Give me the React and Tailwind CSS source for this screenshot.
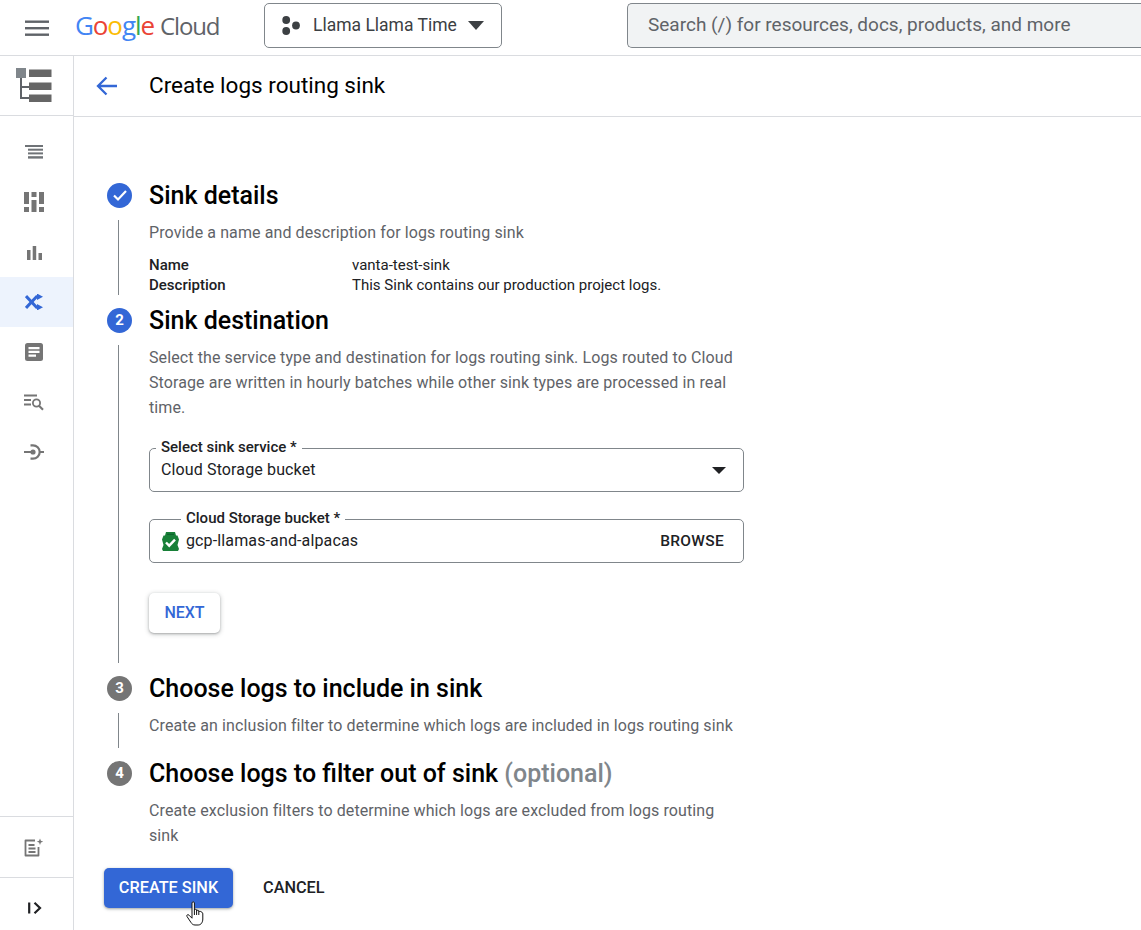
const FONT = "font-['Roboto',sans-serif]";

function Step({ badge, title, children, line = true, bg = "bg-[#3367d6]" }) {
  return (
    <section>
      <div className="flex h-[50px] items-center">
        <div className={`flex h-[25px] w-[25px] items-center justify-center rounded-full ${bg} text-[15px] font-bold text-white`}>
          {badge}
        </div>
        <h2 className="ml-[17px] pt-px text-[25px] font-medium leading-[30px] text-[#000]">{title}</h2>
      </div>
      <div className={`ml-[11px] pl-[30px] ${line ? "border-l border-[#80868b]" : "border-l border-transparent"}`}>{children}</div>
    </section>
  );
}

function SideItem({ active, children }) {
  return (
    <div className={`flex h-[50px] items-center justify-center pr-[5px] ${active ? "bg-[#edf3fd]" : ""}`}>{children}</div>
  );
}

function Field({ label, labelClass, children }) {
  return (
    <div className="relative flex h-[44px] items-center rounded-[5px] border border-[#80868b] pl-[11px] pr-[19px] text-[16px] tracking-[0.13px] text-[#202124]">
      <span className={`absolute top-[-11px] bg-white px-[5px] text-[15px] font-medium leading-[18px] tracking-normal text-[#202124] ${labelClass}`}>{label}</span>
      {children}
    </div>
  );
}

export default function App() {
  return (
    <div className={`${FONT} h-[930px] w-[1141px] overflow-hidden bg-white text-[#202124]`}>
      <header className="flex h-[56px] items-center border-b border-[#dadce0]">
        <svg className="ml-[25px] h-[24px] w-[24px]" viewBox="0 0 24 24" fill="#5f6368">
          <rect x="0" y="4.5" width="24" height="2.4" />
          <rect x="0" y="11" width="24" height="2.4" />
          <rect x="0" y="17.5" width="24" height="2.4" />
        </svg>
        <div className="mb-[5px] ml-[26px] flex w-[146px] items-baseline whitespace-nowrap font-['Open_Sans',sans-serif] text-[26px] leading-[32px] tracking-[-1.1px]">
          <span className="font-medium text-[#4285f4]">G</span>
          <span className="font-medium text-[#ea4335]">o</span>
          <span className="font-medium text-[#fbbc04]">o</span>
          <span className="font-medium text-[#4285f4]">g</span>
          <span className="font-medium text-[#34a853]">l</span>
          <span className="font-medium text-[#ea4335]">e</span>
          <span className="ml-[6px] text-[24px] text-[#5f6368]">Cloud</span>
        </div>
        <div className="mb-[4px] ml-[43px] flex h-[45px] w-[238px] items-center rounded-[5px] border border-[#80868b] pl-[17px]">
          <svg className="h-[19px] w-[18px]" viewBox="0 0 18 19" fill="#3c4043">
            <circle cx="4.2" cy="4" r="3.9" />
            <circle cx="4.2" cy="15" r="3.9" />
            <circle cx="14" cy="9.5" r="3.9" />
          </svg>
          <span className="ml-[13px] text-[17.5px] text-[#3c4043]">Llama Llama Time</span>
          <svg className="ml-[11px] h-[9px] w-[16px]" viewBox="0 0 16 9" fill="#3c4043"><path d="M0 0h16L8 9z" /></svg>
        </div>
        <div className="mb-[4px] ml-[125px] flex h-[45px] flex-1 items-center rounded-l-[5px] border border-r-0 border-[#80868b] bg-[#f1f3f4] pl-[20px] text-[19px] text-[#5f6368]">
          Search (/) for resources, docs, products, and more
        </div>
      </header>

      <div className="flex h-[874px]">
        <aside className="flex w-[74px] flex-col border-r border-[#dadce0]">
          <div className="flex h-[60px] items-center justify-center border-b border-[#dadce0] pr-[5px]">
            <svg className="h-[36px] w-[36px]" viewBox="0 0 36 36">
              <rect x="0" y="0" width="10" height="10" fill="#80868b" />
              <path d="M5 10v20h8M5 19h8" fill="none" stroke="#5f6368" strokeWidth="2" />
              <rect x="13" y="1.5" width="22.5" height="7.5" fill="#666" />
              <rect x="13" y="14.5" width="22.5" height="7.5" fill="#666" />
              <rect x="13" y="26.5" width="22.5" height="7.5" fill="#666" />
            </svg>
          </div>
          <div className="flex flex-col pt-[11px]">
            <SideItem>
              <svg className="h-[14px] w-[18px]" viewBox="0 0 18 14" fill="#6f7377">
                <rect x="0" y="0" width="18" height="2" />
                <rect x="3" y="3.7" width="15" height="2" />
                <rect x="3" y="7.4" width="15" height="2" />
                <rect x="3" y="11.2" width="15" height="2.4" />
              </svg>
            </SideItem>
            <SideItem>
              <svg className="h-[20px] w-[20px]" viewBox="0 0 20 20" fill="#757575">
                <rect x="0" y="0" width="5" height="12" />
                <rect x="0" y="15" width="5" height="5" />
                <rect x="7.5" y="0" width="5" height="5" />
                <rect x="7.5" y="8" width="5" height="12" />
                <rect x="15" y="0" width="5" height="12" />
                <rect x="15" y="15" width="5" height="5" />
              </svg>
            </SideItem>
            <SideItem>
              <svg className="mt-[2px] h-[14px] w-[15px]" viewBox="0 0 15 14" fill="#757575">
                <rect x="0" y="4" width="3.5" height="10" />
                <rect x="5.7" y="0" width="3.5" height="14" />
                <rect x="11.5" y="7" width="3.5" height="7" />
              </svg>
            </SideItem>
            <SideItem active>
              <svg className="h-[16px] w-[18px]" viewBox="0 0 18 16" fill="none" stroke="#3367d6" strokeWidth="3">
                <path d="M1 2L11.5 13.2h2" />
                <path d="M1 14L11.5 2.8h2" />
                <path d="M12 -0.5l6 3.3-6 3.3zM12 9.9l6 3.3-6 3.3z" fill="#3367d6" stroke="none" />
              </svg>
            </SideItem>
            <SideItem>
              <svg className="h-[18px] w-[18px]" viewBox="0 0 18 18">
                <rect width="18" height="18" rx="2.5" fill="#757575" />
                <path d="M3.5 4h11v2.2h-11zM3.5 7.8h11v2.2h-11zM3.5 11.6h7.5v2.2h-7.5z" fill="#fff" />
              </svg>
            </SideItem>
            <SideItem>
              <svg className="h-[20px] w-[20px]" viewBox="0 0 20 20" fill="none" stroke="#757575" strokeWidth="1.8">
                <path d="M0 3.5h13M0 8h7M0 12.5h7" />
                <circle cx="12.5" cy="11" r="3.6" />
                <path d="M15 13.8l4 4" strokeWidth="2.2" />
              </svg>
            </SideItem>
            <SideItem>
              <svg className="h-[20px] w-[20px]" viewBox="0 0 20 20" fill="none" stroke="#757575" strokeWidth="2.2">
                <path d="M6.5 3.3h2.5a6.7 6.7 0 0 1 0 13.4H6.5" />
                <path d="M0 10h8M15.5 10H20" />
                <circle cx="9" cy="10" r="2.6" fill="#757575" stroke="none" />
              </svg>
            </SideItem>
          </div>
          <div className="mt-auto border-t border-[#dadce0]">
            <div className="flex h-[60px] items-center justify-center pr-[5px] pt-[2px]">
              <svg className="h-[20px] w-[20px]" viewBox="0 0 20 20" fill="none" stroke="#757575" strokeWidth="1.8" strokeLinejoin="round">
                <path d="M11 2.5H1.5v15h13V9" />
                <path d="M4.5 7h6M4.5 10.5h7M4.5 14h7" />
                <path d="M16 0.5l.9 2.3 2.3.9-2.3.9-.9 2.3-.9-2.3-2.3-.9 2.3-.9z" fill="#757575" stroke="none" />
              </svg>
            </div>
            <div className="flex h-[53px] items-center justify-center border-t border-[#dadce0] pr-[3px] pt-[8px]">
              <svg className="h-[12px] w-[14px]" viewBox="0 0 14 12" fill="none" stroke="#202124" strokeWidth="2.2">
                <path d="M1.2 0.5v11" />
                <path d="M6.5 0.8L12 6l-5.5 5.2" />
              </svg>
            </div>
          </div>
        </aside>

        <main className="relative flex-1">
          <div className="flex h-[61px] items-center border-b border-[#dadce0]">
            <svg className="ml-[22px] h-[22px] w-[22px]" viewBox="0 0 22 22" fill="none" stroke="#3367d6" strokeWidth="2.3">
              <path d="M21 11H2.5M10.5 2.5L2 11l8.5 8.5" />
            </svg>
            <h1 className="ml-[31px] text-[22.5px] font-normal text-[#000]">Create logs routing sink</h1>
          </div>

          <div className="w-[670px] pl-[33px] pt-[53px]">
            <Step badge={<svg className="h-[14px] w-[14px]" viewBox="0 0 14 14" fill="none" stroke="#fff" strokeWidth="2.2"><path d="M1 7.5l4 4L13 3" /></svg>} title="Sink details">
              <div className="h-[75px] text-[#5f6368]">
                <p className="text-[16px] leading-[25px] tracking-[0.1px]">Provide a name and description for logs routing sink</p>
                <dl className="mt-[10px] text-[15px] leading-[20px] text-[#202124]">
                  <div className="flex"><dt className="w-[203px] font-medium">Name</dt><dd>vanta-test-sink</dd></div>
                  <div className="flex"><dt className="w-[203px] font-medium">Description</dt><dd>This Sink contains our production project logs.</dd></div>
                </dl>
              </div>
            </Step>
            <Step badge="2" title="Sink destination">
              <div className="h-[318px]">
                <p className="text-[16px] leading-[25px] tracking-[0.1px] text-[#5f6368]">Select the service type and destination for logs routing sink. Logs routed to Cloud Storage are written in hourly batches while other sink types are processed in real time.</p>
                <div className="mt-[28px] w-[595px]">
                  <Field label="Select sink service *" labelClass="left-[6px]">
                    <span>Cloud Storage bucket</span>
                    <svg className="ml-auto mr-[-2px] h-[7px] w-[14px]" viewBox="0 0 14 7" fill="#202124"><path d="M0 0h14L7 7z" /></svg>
                  </Field>
                  <div className="h-[27px]" />
                  <Field label="Cloud Storage bucket *" labelClass="left-[31px]">
                    <svg className="mr-[8px] h-[19px] w-[17px] shrink-0 translate-x-[1px]" viewBox="0 0 17 19">
                      <path d="M4 0h9l1 3.5h1.5L17 7.5 15.5 13l1.5 4-1 2H1l-1-2 1.5-4L0 7.5 1.5 3.5H3z" fill="#188038" />
                      <rect x="5" y="1.8" width="7" height="1.2" fill="#0d652d" />
                      <path d="M4 10.5l3.2 3.2 5.8-6" fill="none" stroke="#fff" strokeWidth="2.4" />
                    </svg>
                    <span>gcp-llamas-and-alpacas</span>
                    <span className="ml-auto pt-px text-[15.5px] font-medium tracking-[0.3px] text-[#202124]">BROWSE</span>
                  </Field>
                  <button className="mt-[30px] h-[40px] w-[71px] rounded-[5px] bg-white text-[16px] font-medium text-[#3367d6] shadow-[0_1px_2px_rgba(60,64,67,0.3),0_1px_4px_1px_rgba(60,64,67,0.2)]">NEXT</button>
                </div>
              </div>
            </Step>
            <Step badge="3" title="Choose logs to include in sink" bg="bg-[#757575]">
              <p className="h-[35px] text-[16px] leading-[25px] tracking-[0.1px] text-[#5f6368]">Create an inclusion filter to determine which logs are included in logs routing sink</p>
            </Step>
            <Step badge="4" title={<>Choose logs to filter out of sink <span className="text-[#80868b]">(optional)</span></>} line={false} bg="bg-[#757575]">
              <p className="h-[50px] text-[16px] leading-[25px] tracking-[0.1px] text-[#5f6368]">Create exclusion filters to determine which logs are excluded from logs routing sink</p>
            </Step>
          </div>

          <div className="mt-[20px] flex items-center pl-[30px]">
            <button className="h-[40px] w-[129px] rounded-[5px] bg-[#3367d6] text-[16.3px] font-medium text-white shadow-[0_1px_2px_rgba(60,64,67,0.3),0_1px_3px_1px_rgba(60,64,67,0.15)]">CREATE SINK</button>
            <button className="ml-[30px] text-[16.3px] font-medium text-[#202124]">CANCEL</button>
          </div>

          <svg className="absolute left-[112px] top-[845px] h-[25px] w-[18px]" viewBox="0 0 18 25" fill="#fff" stroke="#111" strokeWidth="1">
            <path d="M6 2c0-1.6 2.4-1.6 2.4 0v7c0-1 2.2-1 2.2 0v1c0-1 2.2-1 2.2 0v1c0-1 2.2-1 2.2 0 1 0 1.8.6 1.8 2v5c0 3-1.6 6-4.6 6H9c-2 0-3-1-4-2.5L1 15.5c-.8-1.4 1-2.6 2-1.3l3 3z" />
            <path d="M8.4 9v5M10.6 10v4M12.8 11v3" fill="none" />
          </svg>
        </main>
      </div>
    </div>
  );
}
